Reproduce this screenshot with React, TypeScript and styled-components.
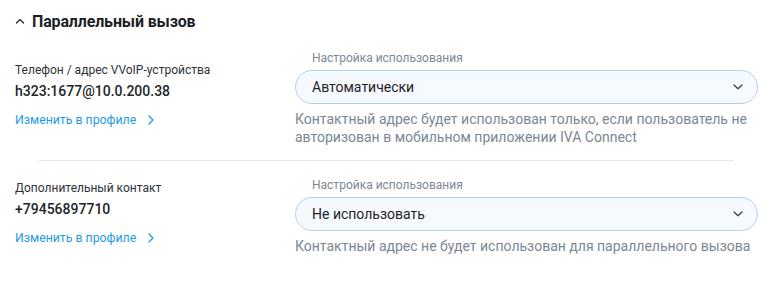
import React from 'react'
import styled, { createGlobalStyle } from 'styled-components'

const GlobalStyle = createGlobalStyle`
  html, body {
    margin: 0;
    padding: 0;
    background: #fff;
  }
  body {
    font-family: Roboto, 'Noto Sans', Arial, sans-serif;
    -webkit-font-smoothing: antialiased;
  }
`

interface ContactRow {
  label: string
  value: string
  mode: string
  hint: string
}

const rows: ContactRow[] = [
  {
    label: 'Телефон / адрес VVoIP-устройства',
    value: 'h323:1677@10.0.200.38',
    mode: 'Автоматически',
    hint: 'Контактный адрес будет использован только, если пользователь не авторизован в мобильном приложении IVA Connect',
  },
  {
    label: 'Дополнительный контакт',
    value: '+79456897710',
    mode: 'Не использовать',
    hint: 'Контактный адрес не будет использован для параллельного вызова',
  },
]

const App: React.FC = () => {
  return (
    <>
      <GlobalStyle />
      <StyledSection>
        <StyledHeader>
          <svg width="10" height="6" viewBox="0 0 10 6" fill="none">
            <path d="M1.5 5L5 1.5L8.5 5" stroke="#2a2f36" strokeWidth="1.4" strokeLinecap="round" strokeLinejoin="round" />
          </svg>
          <StyledTitle>Параллельный вызов</StyledTitle>
        </StyledHeader>
        {rows.map((row, i) => (
          <React.Fragment key={i}>
            {i > 0 && <StyledDivider />}
            <StyledRow first={i === 0}>
              <StyledInfo>
                <StyledLabel>{row.label}</StyledLabel>
                <StyledValue>{row.value}</StyledValue>
                <StyledLink href="#">
                  Изменить в профиле
                  <svg width="6" height="10" viewBox="0 0 6 10" fill="none">
                    <path d="M1 1L5 5L1 9" stroke="#1f9be6" strokeWidth="1.3" strokeLinecap="round" strokeLinejoin="round" />
                  </svg>
                </StyledLink>
              </StyledInfo>
              <StyledSetting>
                <StyledFieldLabel>Настройка использования</StyledFieldLabel>
                <StyledSelect>
                  <span>{row.mode}</span>
                  <svg width="10" height="6" viewBox="0 0 10 6" fill="none">
                    <path d="M1 1L5 4.8L9 1" stroke="#3a4250" strokeWidth="1.3" strokeLinecap="round" strokeLinejoin="round" />
                  </svg>
                </StyledSelect>
                <StyledHint>{row.hint}</StyledHint>
              </StyledSetting>
            </StyledRow>
          </React.Fragment>
        ))}
      </StyledSection>
    </>
  )
}

const StyledSection = styled.div`
  width: 770px;
  padding: 0 12px 0 15px;
  box-sizing: border-box;
`

const StyledHeader = styled.div`
  display: flex;
  align-items: center;
  gap: 7px;
  height: 34px;
  margin-top: 4px;
`

const StyledTitle = styled.h3`
  margin: 0;
  font-size: 16px;
  font-weight: 700;
  letter-spacing: -0.15px;
  color: #1b1f24;
`

const StyledRow = styled.div<{ first?: boolean }>`
  display: grid;
  grid-template-columns: 280px 463px;
  align-items: center;
  padding: ${(props) => (props.first ? '12px' : '16px')} 0 14px;
`

const StyledInfo = styled.div`
  display: flex;
  flex-direction: column;
  align-items: flex-start;
  padding-bottom: 3px;
`

const StyledLabel = styled.div`
  font-size: 12px;
  line-height: 16px;
  color: #2e3339;
`

const StyledValue = styled.div`
  margin-top: 3px;
  font-size: 14px;
  line-height: 20px;
  font-weight: 500;
  color: #22262b;
`

const StyledLink = styled.a`
  display: inline-flex;
  align-items: center;
  gap: 12px;
  height: 24px;
  margin-top: 7px;
  font-size: 12.3px;
  color: #1f9be6;
  text-decoration: none;
`

const StyledSetting = styled.div`
  display: flex;
  flex-direction: column;
`

const StyledFieldLabel = styled.div`
  padding-left: 17px;
  font-size: 12px;
  line-height: 16px;
  color: #7d8894;
`

const StyledSelect = styled.div`
  display: flex;
  align-items: center;
  justify-content: space-between;
  height: 34px;
  margin-top: 4px;
  padding: 0 14px 0 16px;
  box-sizing: border-box;
  border: 1px solid #b7d0ea;
  border-radius: 17px;
  background: #f6f9fd;
  font-size: 14px;
  color: #1f2328;
`

const StyledHint = styled.div`
  margin-top: 6px;
  font-size: 14px;
  line-height: 18px;
  color: #7a8794;
`

const StyledDivider = styled.div`
  height: 1px;
  margin: 0 24px;
  background: #e4e8ee;
`

export default App
